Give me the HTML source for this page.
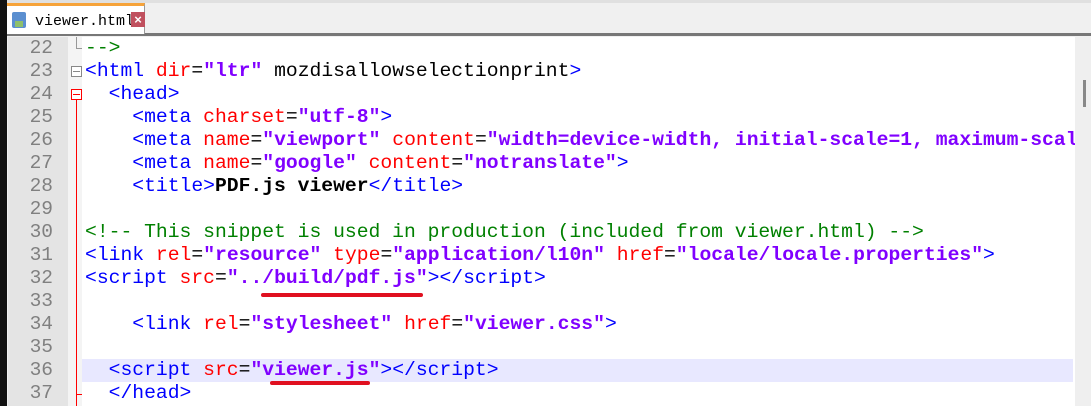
<!DOCTYPE html>
<html><head><meta charset="utf-8"><style>
body{margin:0;width:1091px;height:406px;overflow:hidden;background:#f0f0f0;position:relative;font-family:"Liberation Mono",monospace}
.strip{position:absolute;left:0;top:0;width:7px;height:406px;background:#111}
.tabbar{position:absolute;left:7px;top:0;right:0;height:36px;background:#f0f0f0;border-top:3px solid #e0e0e0;box-sizing:border-box;border-bottom:3px solid #777}
.tab{position:absolute;left:7px;top:3px;width:138px;height:31px;background:#fff;border-top:3px solid #f6a33a;border-right:1px solid #999;box-sizing:border-box;font-size:15px;font-family:"Liberation Mono",monospace}
.tab .t{position:absolute;left:28px;top:7px;color:#000}
.disk{position:absolute;left:5px;top:6px;width:14px;height:16px;background:#5b8fd0;border-radius:2px}
.disk:after{content:"";position:absolute;left:3px;top:9px;width:8px;height:6px;background:#8fc06a}
.x{position:absolute;left:124px;top:6px;width:14px;height:15px;background:#c0505e;color:#fff;font-size:13px;line-height:15px;text-align:center;font-family:"Liberation Sans",sans-serif;font-weight:bold}
.gut{position:absolute;left:8px;top:37px;width:60px;height:369px;background:#e4e4e4}
.fold{position:absolute;left:68px;top:37px;width:14px;height:369px;background:#f4f4f4}
.ed{position:absolute;left:82px;top:37px;width:993px;height:369px;background:#fff}
.thumb{position:absolute;left:1083px;top:80px;width:3px;height:27px;background:#888}
.hl{position:absolute;left:82px;top:359px;width:991px;height:23px;background:#e8e8ff}
.ln{position:absolute;left:8px;width:45px;text-align:right;color:#808080;font-size:19.5px;line-height:23px}
.code{position:absolute;left:85px;font-size:19.7px;line-height:23px;white-space:pre;color:#000}
.t_{color:#0000ff}.a{color:#ff0000}.v{color:#8000ff;font-weight:bold}.c{color:#008000}.b{font-weight:bold}
.ul{position:absolute;height:4px;background:#e01020;border-radius:2px}
</style></head><body>
<div class="strip"></div>
<div class="tabbar"></div>
<div class="tab"><div class="disk"></div><span class="t">viewer.html</span><div class="x">×</div></div>
<div class="gut"></div><div class="fold"></div><div class="ed"></div>
<div class="hl"></div>
<div style="position:absolute;left:76px;top:37px;width:1px;height:11px;background:#999"></div>
<div style="position:absolute;left:76px;top:48px;width:6px;height:1px;background:#999"></div>
<div style="position:absolute;left:71px;top:66px;width:9px;height:9px;border:1px solid #888;background:#fff"></div>
<div style="position:absolute;left:73px;top:71px;width:7px;height:1px;background:#888"></div>
<div style="position:absolute;left:71px;top:89px;width:9px;height:9px;border:1px solid #f00;background:#fff"></div>
<div style="position:absolute;left:73px;top:94px;width:7px;height:1px;background:#f00"></div>
<div style="position:absolute;left:76px;top:100px;width:1px;height:306px;background:#f00"></div>
<div style="position:absolute;left:76px;top:394px;width:6px;height:1px;background:#f00"></div>
<div class="ln" style="top:37px">22</div><div class="ln" style="top:60px">23</div><div class="ln" style="top:83px">24</div><div class="ln" style="top:106px">25</div><div class="ln" style="top:129px">26</div><div class="ln" style="top:152px">27</div><div class="ln" style="top:175px">28</div><div class="ln" style="top:198px">29</div><div class="ln" style="top:221px">30</div><div class="ln" style="top:244px">31</div><div class="ln" style="top:267px">32</div><div class="ln" style="top:290px">33</div><div class="ln" style="top:313px">34</div><div class="ln" style="top:336px">35</div><div class="ln" style="top:359px">36</div><div class="ln" style="top:382px">37</div>
<div class="code" style="top:37px"><span class="c">--&gt;</span></div>
<div class="code" style="top:60px"><span class="t_">&lt;html</span> <span class="a">dir</span>=<span class="v">"ltr"</span> mozdisallowselectionprint<span class="t_">&gt;</span></div>
<div class="code" style="top:83px">  <span class="t_">&lt;head&gt;</span></div>
<div class="code" style="top:106px">    <span class="t_">&lt;meta</span> <span class="a">charset</span>=<span class="v">"utf-8"</span><span class="t_">&gt;</span></div>
<div class="code" style="top:129px">    <span class="t_">&lt;meta</span> <span class="a">name</span>=<span class="v">"viewport"</span> <span class="a">content</span>=<span class="v">"width=device-width, initial-scale=1, maximum-scale=1"</span></div>
<div class="code" style="top:152px">    <span class="t_">&lt;meta</span> <span class="a">name</span>=<span class="v">"google"</span> <span class="a">content</span>=<span class="v">"notranslate"</span><span class="t_">&gt;</span></div>
<div class="code" style="top:175px">    <span class="t_">&lt;title&gt;</span><span class="b">PDF.js viewer</span><span class="t_">&lt;/title&gt;</span></div>
<div class="code" style="top:221px"><span class="c">&lt;!-- This snippet is used in production (included from viewer.html) --&gt;</span></div>
<div class="code" style="top:244px"><span class="t_">&lt;link</span> <span class="a">rel</span>=<span class="v">"resource"</span> <span class="a">type</span>=<span class="v">"application/l10n"</span> <span class="a">href</span>=<span class="v">"locale/locale.properties"</span><span class="t_">&gt;</span></div>
<div class="code" style="top:267px"><span class="t_">&lt;script</span> <span class="a">src</span>=<span class="v">"../build/pdf.js"</span><span class="t_">&gt;&lt;/script&gt;</span></div>
<div class="code" style="top:313px">    <span class="t_">&lt;link</span> <span class="a">rel</span>=<span class="v">"stylesheet"</span> <span class="a">href</span>=<span class="v">"viewer.css"</span><span class="t_">&gt;</span></div>
<div class="code" style="top:359px">  <span class="t_">&lt;script</span> <span class="a">src</span>=<span class="v">"viewer.js"</span><span class="t_">&gt;&lt;/script&gt;</span></div>
<div class="code" style="top:382px">  <span class="t_">&lt;/head&gt;</span></div>
<div style="position:absolute;left:1075px;top:37px;width:16px;height:369px;background:#efefef"></div>
<div class="thumb"></div>
<div class="ul" style="left:261px;top:293px;width:162px"></div>
<div class="ul" style="left:270px;top:381px;width:100px"></div>
</body></html>
